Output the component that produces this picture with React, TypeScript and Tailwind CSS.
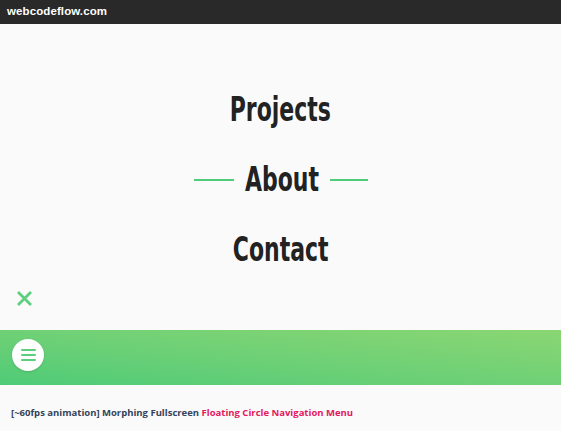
export default function App() {
  return (
    <div className="w-[561px] h-[431px] bg-[#fafafa] flex flex-col overflow-hidden">
      <div className="h-[24px] bg-[#292929] flex items-center px-[7px] shrink-0">
        <span className="text-white text-[11.5px] font-bold font-['Liberation_Sans',sans-serif] tracking-[0.1px]">webcodeflow.com</span>
      </div>

      <div className="h-[306px] flex flex-col pt-[51px] shrink-0">
        <nav className="flex flex-col items-center font-['DejaVu_Sans_Condensed',sans-serif] font-bold text-[#222222] text-[33px]">
          <a className="h-[70px] w-[120px] flex items-center justify-center">
            <span className="scale-x-[0.74] whitespace-nowrap">Projects</span>
          </a>
          <a className="h-[70px] flex items-center gap-[10px]">
            <span className="w-[40px] h-[2px] bg-[#4fcc79]" />
            <span className="w-[76px] flex justify-center">
              <span className="scale-x-[0.74] whitespace-nowrap">About</span>
            </span>
            <span className="w-[38px] h-[2px] bg-[#4fcc79]" />
          </a>
          <a className="h-[70px] w-[120px] flex items-center justify-center">
            <span className="scale-x-[0.74] whitespace-nowrap">Contact</span>
          </a>
        </nav>
        <div className="h-[26px] flex items-center pl-[17px]">
          <svg width="15" height="15" viewBox="0 0 15 15">
            <path d="M2 2L13 13M13 2L2 13" stroke="#5ccf7f" strokeWidth="2.8" strokeLinecap="square" />
          </svg>
        </div>
      </div>

      <div className="h-[55px] bg-gradient-to-tr from-[#4ecb78] to-[#8ad673] flex items-start pt-[9px] pl-[12px] shrink-0">
        <button className="w-[32px] h-[32px] rounded-full bg-white flex flex-col items-center justify-center gap-[2.5px] shadow-sm">
          <span className="w-[15px] h-[2.5px] rounded bg-[#5ccf7f]" />
          <span className="w-[15px] h-[2.5px] rounded bg-[#5ccf7f]" />
          <span className="w-[15px] h-[2.5px] rounded bg-[#5ccf7f]" />
        </button>
      </div>

      <p className="pt-[21px] pl-[11px] text-[9.5px] font-bold text-[#34425a] font-['Open_Sans',sans-serif]">
        [~60fps animation] Morphing Fullscreen <span className="text-[#e5175f]">Floating Circle Navigation Menu</span>
      </p>
    </div>
  )
}
